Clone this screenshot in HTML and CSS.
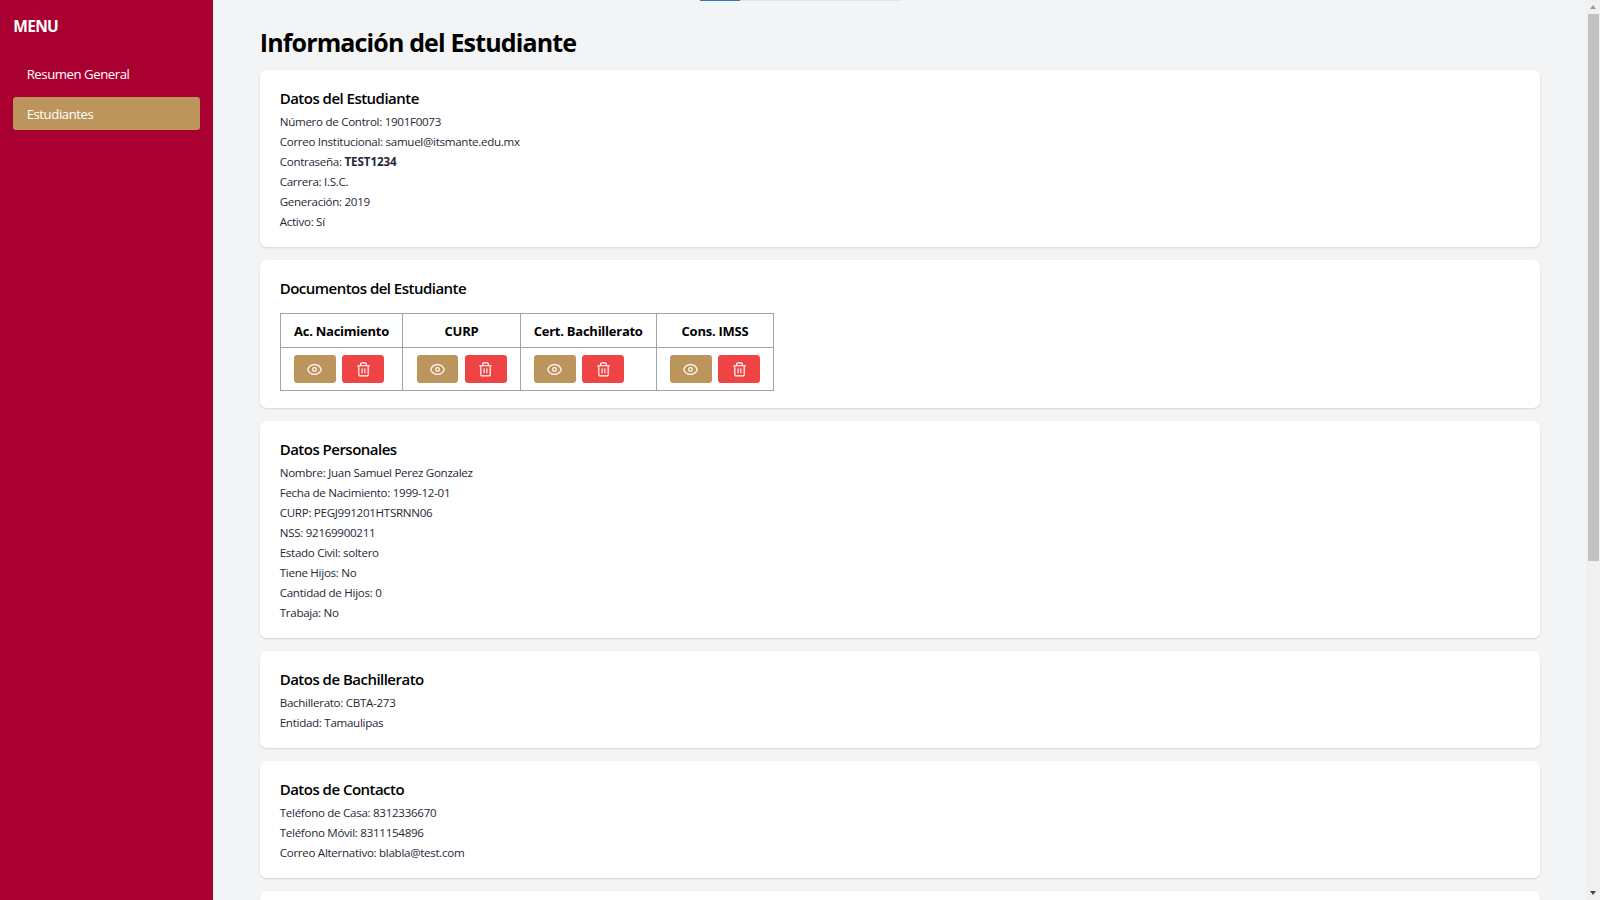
FILE: index.html
```html
<!DOCTYPE html>
<html lang="es">
<head>
<meta charset="utf-8">
<title>Información del Estudiante</title>
<link rel="stylesheet" href="styles.css">
</head>
<body>
<svg class="defs" width="0" height="0">
  <symbol id="eye" viewBox="0 0 24 24"><path d="M1.300 12.400a1 1 0 0 1 0-.8C3 7.200 7.200 4.200 12 4.200s9 3 10.700 7.400a1 1 0 0 1 0 .8C21 16.800 16.800 19.800 12 19.800s-9-3-10.700-7.400Z"/><circle cx="12" cy="12" r="3"/></symbol>
  <symbol id="trash" viewBox="0 0 24 24"><path d="M2.500 6h19M7.500 6V3.200a1.700 1.700 0 0 1 1.700-1.700h5.600a1.700 1.700 0 0 1 1.700 1.700V6M4.500 6v14.300a2 2 0 0 0 2 2h11a2 2 0 0 0 2-2V6M9.800 10.800v6.200M14.200 10.800v6.200"/></symbol>
</svg>
<div class="app">
  <aside class="sidebar">
    <h2 class="menu-title">MENU</h2>
    <nav class="menu">
      <a class="menu-item"><span>Resumen General</span></a>
      <a class="menu-item active"><span>Estudiantes</span></a>
    </nav>
  </aside>
  <main class="content">
    <div class="loader"><div class="loader-bar"></div></div>
    <h1 class="title"><span>Información del Estudiante</span></h1>
    <div class="cards">
      <section class="card">
        <h3><span>Datos del Estudiante</span></h3>
        <p>Número de Control: 1901F0073</p>
        <p><span>Correo Institucional: samuel@itsmante.edu.mx</span></p>
        <p>Contraseña: <strong>TEST1234</strong></p>
        <p>Carrera: I.S.C.</p>
        <p>Generación: 2019</p>
        <p>Activo: Sí</p>
      </section>
      <section class="card">
        <h3 class="spaced">Documentos del Estudiante</h3>
        <table class="docs">
          <colgroup><col class="c1"><col class="c2"><col class="c3"><col class="c4"></colgroup>
          <tr><th>Ac. Nacimiento</th><th>CURP</th><th>Cert. Bachillerato</th><th>Cons. IMSS</th></tr>
          <tr>
            <td><div class="actions"><button class="view"><svg><use href="#eye"/></svg></button><button class="delete"><svg><use href="#trash"/></svg></button></div></td>
            <td><div class="actions"><button class="view"><svg><use href="#eye"/></svg></button><button class="delete"><svg><use href="#trash"/></svg></button></div></td>
            <td><div class="actions"><button class="view"><svg><use href="#eye"/></svg></button><button class="delete"><svg><use href="#trash"/></svg></button></div></td>
            <td><div class="actions"><button class="view"><svg><use href="#eye"/></svg></button><button class="delete"><svg><use href="#trash"/></svg></button></div></td>
          </tr>
        </table>
      </section>
      <section class="card">
        <h3>Datos Personales</h3>
        <p>Nombre: Juan Samuel Perez Gonzalez</p>
        <p>Fecha de Nacimiento: 1999-12-01</p>
        <p>CURP: PEGJ991201HTSRNN06</p>
        <p>NSS: 92169900211</p>
        <p>Estado Civil: soltero</p>
        <p>Tiene Hijos: No</p>
        <p>Cantidad de Hijos: 0</p>
        <p>Trabaja: No</p>
      </section>
      <section class="card">
        <h3>Datos de Bachillerato</h3>
        <p>Bachillerato: CBTA-273</p>
        <p>Entidad: Tamaulipas</p>
      </section>
      <section class="card">
        <h3>Datos de Contacto</h3>
        <p>Teléfono de Casa: 8312336670</p>
        <p>Teléfono Móvil: 8311154896</p>
        <p>Correo Alternativo: blabla@test.com</p>
      </section>
      <section class="card next"></section>
    </div>
  </main>
  <div class="scrollbar">
    <svg class="arrow up" viewBox="0 0 6 4"><path d="M0 4 3 0l3 4z"/></svg>
    <div class="track"><div class="thumb"></div></div>
    <svg class="arrow down" viewBox="0 0 6 4"><path d="M0 0h6L3 4z"/></svg>
  </div>
</div>
</body>
</html>
```
FILE: styles.css
```css
* { box-sizing: border-box; margin: 0; padding: 0; }
body {
  font-family: "Open Sans", "Noto Sans", sans-serif;
  background: #f3f4f6;
  color: #000;
  height: 900px;
  overflow: hidden;
}
.defs { position: absolute; }
.app { display: flex; height: 900px; overflow: hidden; }

.sidebar {
  width: 213.33px;
  flex: none;
  padding: 15px 13.33px;
  background: #a90031;
  color: #fff;
}
.menu-title { font-size: 15.5px; line-height: 23.33px; font-weight: 700; letter-spacing: -0.7px; margin-bottom: 18.33px; }
.menu { display: flex; flex-direction: column; gap: 6.67px; }
.menu-item {
  height: 33.33px;
  line-height: 34.33px;
  padding: 0 13.33px;
  border-radius: 3.33px;
  font-size: 13.2px;
  letter-spacing: -0.45px;
}
.menu-item.active { background: #bc955c; }

.content { flex: 1; position: relative; padding: 26.67px 43.34px 0 46.4px; overflow: hidden; }
.loader {
  position: absolute;
  top: 0;
  left: 487px;
  width: 201px;
  height: 1px;
  background: #e4e5e8;
}
.loader-bar { width: 40px; height: 1px; background: #3477b2; }
.title { font-size: 25px; line-height: 30px; font-weight: 700; letter-spacing: -0.86px; margin-bottom: 13.33px; }
.cards { display: flex; flex-direction: column; gap: 13.33px; width: 1280px; }
.card {
  flex: none;
  padding: 16.67px 20px 15px;
  background: #fff;
  border-radius: 6.67px;
  box-shadow: 0 1px 2.5px rgba(0, 0, 0, .1), 0 1px 2px -1px rgba(0, 0, 0, .1);
}
.card.next { height: 150px; }
.card h3 { font-size: 15px; line-height: 23.33px; font-weight: 600; letter-spacing: -0.52px; margin-bottom: 1.67px; }
.card h3.spaced { margin-bottom: 13.33px; }
.card p { font-size: 11.6px; line-height: 20px; letter-spacing: -0.3px; color: #1f2937; }
.card p strong { letter-spacing: -0.1px; }

.docs { table-layout: fixed; border-collapse: collapse; width: 493.5px; margin-bottom: 1.87px; }
.docs th, .docs td { border: 1px solid #9ca3af; }
.docs th { height: 34px; font-size: 13px; line-height: 20px; font-weight: 700; letter-spacing: -0.25px; white-space: nowrap; }
.docs td { height: 43px; padding: 0 13.4px; }
.c1 { width: 122.5px; }
.c2 { width: 117.5px; }
.c3 { width: 136px; }
.c4 { width: 117.5px; }
.actions { display: flex; gap: 6.67px; }
.actions button {
  display: flex;
  flex: none;
  align-items: center;
  justify-content: center;
  width: 41.67px;
  height: 28px;
  border: 0;
  border-radius: 3.33px;
}
.actions svg { width: 15px; height: 15px; fill: none; stroke: #fff; stroke-width: 1.9; stroke-linecap: round; stroke-linejoin: round; }
.view { background: #bc955c; }
.delete { background: #ef4444; }

.scrollbar {
  width: 14px;
  flex: none;
  display: flex;
  flex-direction: column;
  align-items: center;
  background: #f0f0f0;
}
.arrow { width: 6px; height: 4px; flex: none; }
.up { margin: 5px 0; fill: #9a9a9a; }
.down { margin: 5px 0; fill: #444; }
.track { flex: 1; width: 11px; }
.thumb { height: 547px; background: #c1c1c1; }
```
